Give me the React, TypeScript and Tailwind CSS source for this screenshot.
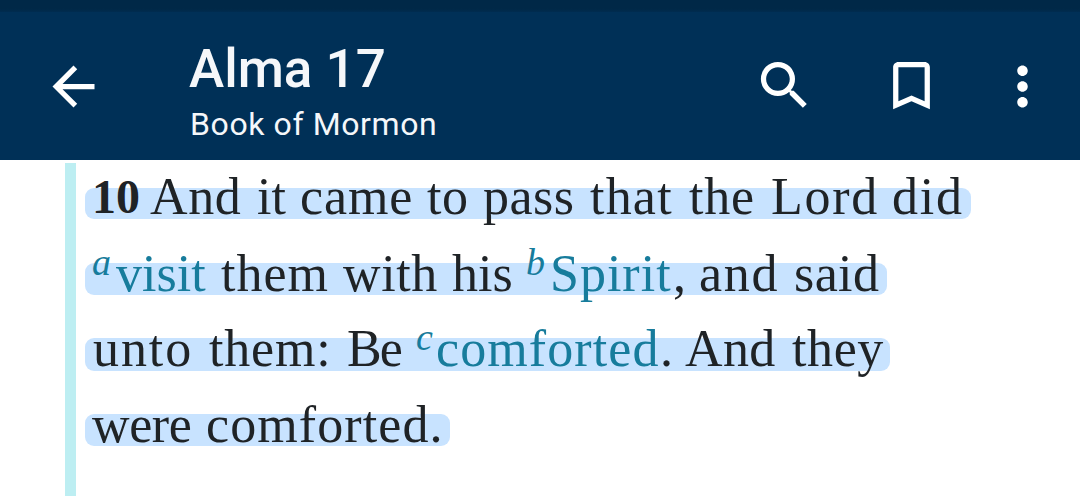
import type { ReactNode } from "react";
import clsx from "clsx";

type Word = { text: string; box: string; kind?: "verse" | "note" | "link" };
type Line = { bar: string; words: Word[] };

// one entry per line of the verse; every box runs up to the start of the next word
const lines: Line[] = [
  {
    bar: "mt-[25px] h-[31px] w-[886px] leading-[17px]",
    words: [
      { text: "10", box: "w-[58px] -ml-px", kind: "verse" },
      { text: "And", box: "w-[107px] tracking-[0.6px]" },
      { text: "it", box: "w-[43px]" },
      { text: "came", box: "w-[127px] tracking-[0.9px]" },
      { text: "to", box: "w-[56px] tracking-[0.5px]" },
      { text: "pass", box: "w-[107px] tracking-[0.5px]" },
      { text: "that", box: "w-[99px] tracking-[1.2px]" },
      { text: "the", box: "w-[82px] tracking-[0.8px]" },
      { text: "Lord", box: "w-[121px] tracking-[1.7px]" },
      { text: "did", box: "tracking-[1.8px]" },
    ],
  },
  {
    bar: "mt-[44px] h-[32px] w-[802px] leading-[21px]",
    words: [
      { text: "a", box: "w-[24px] -ml-px", kind: "note" },
      { text: "visit", box: "w-[105px]", kind: "link" },
      { text: "them", box: "w-[122px] tracking-[1px]" },
      { text: "with", box: "w-[109px] tracking-[0.6px]" },
      { text: "his", box: "w-[74px]" },
      { text: "b", box: "w-[24px]", kind: "note" },
      { text: "Spirit", box: "w-[123px] tracking-[1px]", kind: "link" },
      { text: ",", box: "w-[26px]" },
      { text: "and", box: "w-[95px] tracking-[1.7px]" },
      { text: "said", box: "tracking-[0.4px]" },
    ],
  },
  {
    bar: "mt-[43px] h-[33px] w-[805px] leading-[21px]",
    words: [
      { text: "unto", box: "w-[116px] tracking-[1.9px]" },
      { text: "them:", box: "w-[138px] tracking-[0.8px]" },
      { text: "Be", box: "w-[69px] tracking-[-2px]" },
      { text: "c", box: "w-[20px]", kind: "note" },
      { text: "comforted", box: "w-[224px] tracking-[1.1px]", kind: "link" },
      { text: ".", box: "w-[25px]" },
      { text: "And", box: "w-[107px] tracking-[0.4px]" },
      { text: "they", box: "tracking-[0.6px]" },
    ],
  },
  {
    bar: "mt-[43px] h-[32px] w-[365px] leading-[21px]",
    words: [
      { text: "were", box: "w-[114px] -ml-px tracking-[-0.4px]" },
      { text: "comforted.", box: "tracking-[1.1px]" },
    ],
  },
];

const Icon = ({ className, children }: { className?: string; children: ReactNode }) => (
  <svg viewBox="0 0 24 24" fill="currentColor" className={clsx("size-[63px] shrink-0", className)}>
    {children}
  </svg>
);

const Header = () => {
  return (
    <header className="h-[160px] w-full bg-[#003057] text-white">
      <div className="h-3 bg-linear-to-b from-[#002847] from-75% to-[#002c50]" />
      <div className="flex h-[148px] items-start pl-[42px]">
        <Icon className="mt-[43px]">
          <path d="M20 11H7.83l5.59-5.59L12 4l-8 8 8 8 1.41-1.41L7.83 13H20v-2z" />
        </Icon>
        <div className="ml-[84px] w-[564px] pt-[26px] font-['Roboto',sans-serif] text-[#f5f7fa]">
          <h1 className="text-[53px] font-medium leading-[62px]">Alma 17</h1>
          <p className="ml-px mt-[5px] text-[32px] leading-[38px] tracking-[0.6px]">Book of Mormon</p>
        </div>
        <Icon className="mt-[42px]">
          <path d="M15.5 14h-.79l-.28-.27A6.47 6.47 0 0 0 16 9.5 6.5 6.5 0 1 0 9.5 16c1.61 0 3.09-.59 4.23-1.57l.27.28v.79l5 4.99L20.49 19l-4.99-5zm-6 0C7.01 14 5 11.99 5 9.5S7.01 5 9.5 5 14 7.01 14 9.5 11.99 14 9.5 14z" />
        </Icon>
        <Icon className="ml-[64px] mt-[42px]">
          <path d="M17 3H7c-1.1 0-2 .9-2 2v16l7-3 7 3V5c0-1.1-.9-2-2-2zm0 15-5-2.18L7 18V5h10v13z" />
        </Icon>
        <Icon className="ml-[48px] mt-[43px]">
          <path d="M12 8c1.1 0 2-.9 2-2s-.9-2-2-2-2 .9-2 2 .9 2 2 2zm0 2c-1.1 0-2 .9-2 2s.9 2 2 2 2-.9 2-2-.9-2-2-2zm0 6c-1.1 0-2 .9-2 2s.9 2 2 2 2-.9 2-2-.9-2-2-2z" />
        </Icon>
      </div>
    </header>
  );
};

const Verse = () => {
  return (
    <article className="ml-[65px] mt-[3px] h-[333px] border-l-[11px] border-[#bdeef2] pl-[9px] font-['Liberation_Serif',serif] text-[52px] text-[#1f2326]">
      <div className="flex flex-col">
        {lines.map((line, i) => (
          <p key={i} className={clsx("flex rounded-[9px] bg-[#c8e3ff] pl-2 whitespace-nowrap", line.bar)}>
            {line.words.map((word, j) => (
              <span
                key={j}
                className={clsx(
                  "shrink-0",
                  word.box,
                  word.kind === "verse" && "text-[48px] font-bold",
                  word.kind === "link" && "text-[#177c9c]",
                  word.kind === "note" && "-mt-[11px] text-[38px] italic text-[#177c9c]"
                )}
              >
                {word.text}
              </span>
            ))}
          </p>
        ))}
      </div>
    </article>
  );
};

const App = () => {
  return (
    <div className="h-[496px] w-[1080px] overflow-hidden bg-white">
      <Header />
      <Verse />
    </div>
  );
};

export default App;
